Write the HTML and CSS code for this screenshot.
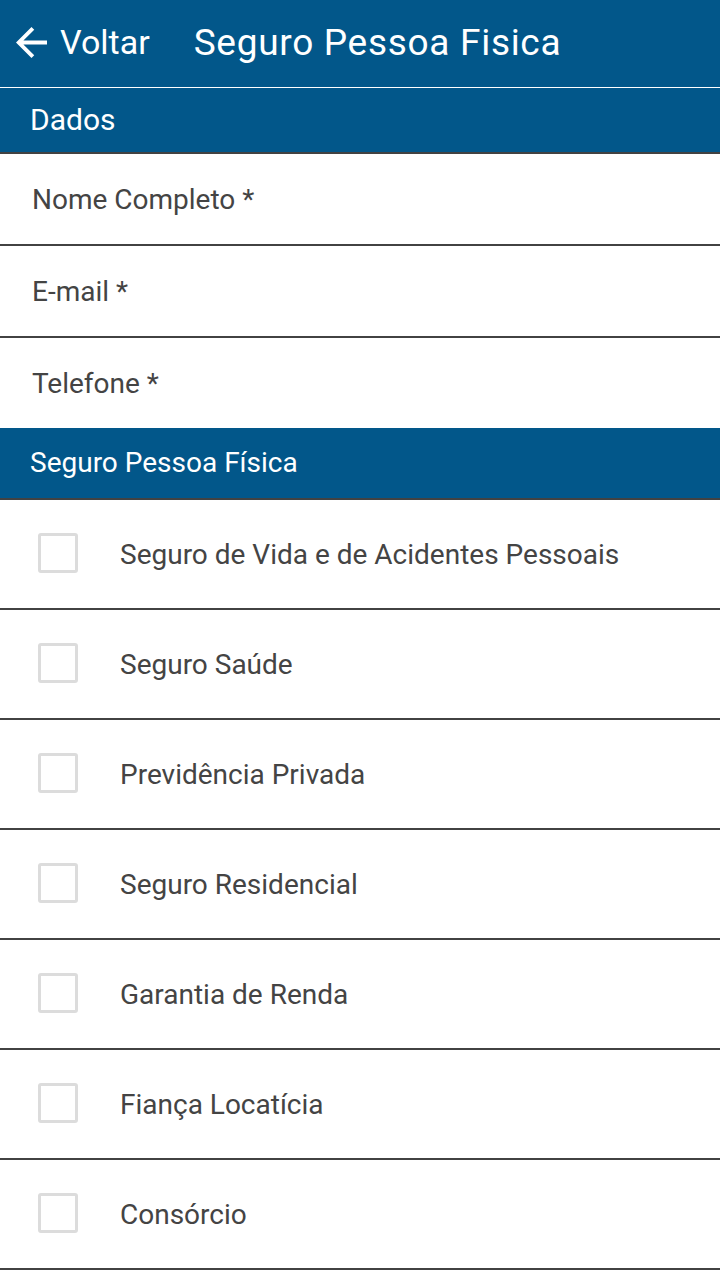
FILE: index.html
```html
<!DOCTYPE html>
<html lang="pt">
<head>
<meta charset="utf-8">
<title>Seguro Pessoa Fisica</title>
<link rel="stylesheet" href="styles.css">
</head>
<body>
<header class="topbar">
  <div class="back">
    <svg class="back-icon" viewBox="4 4 16 16" width="31" height="31"><path d="M20 11H7.83l5.59-5.59L12 4l-8 8 8 8 1.41-1.41L7.83 13H20v-2z" fill="#fff"/></svg>
    <span class="back-label">Voltar</span>
  </div>
  <h1 class="title">Seguro Pessoa Fisica</h1>
</header>
<div class="section section-first">Dados</div>
<div class="field">Nome Completo *</div>
<div class="field">E-mail *</div>
<div class="field field-last">Telefone *</div>
<div class="section section-second">Seguro Pessoa Física</div>
<ul class="options">
  <li class="option"><span class="box"></span><span class="opt-label">Seguro de Vida e de Acidentes Pessoais</span></li>
  <li class="option"><span class="box"></span><span class="opt-label">Seguro Saúde</span></li>
  <li class="option"><span class="box"></span><span class="opt-label">Previdência Privada</span></li>
  <li class="option"><span class="box"></span><span class="opt-label">Seguro Residencial</span></li>
  <li class="option"><span class="box"></span><span class="opt-label">Garantia de Renda</span></li>
  <li class="option"><span class="box"></span><span class="opt-label">Fiança Locatícia</span></li>
  <li class="option"><span class="box"></span><span class="opt-label">Consórcio</span></li>
</ul>
</body>
</html>
```
FILE: styles.css
```css
* { box-sizing: border-box; }
html, body { margin: 0; padding: 0; background: #fff; }
body { font-family: Roboto, "Noto Sans", sans-serif; color: #444; }

.topbar {
  height: 88px;
  background: #02578a;
  border-bottom: 1px solid #fff;
  display: flex;
  align-items: center;
  padding: 0 0 3px 16px;
  color: #fff;
}
.back { display: flex; align-items: center; }
.back-icon { display: block; }
.back-label { font-size: 34px; margin-left: 13px; }
.title { font-size: 37px; font-weight: 400; letter-spacing: 0.7px; margin: 0 0 0 44px; }

.section {
  background: #02578a;
  color: #fff;
  display: flex;
  align-items: center;
  padding: 0 0 2px 30px;
  border-bottom: 2px solid #424242;
}
.section-first { height: 66px; font-size: 30px; }
.section-second { height: 72px; font-size: 28px; }

.field {
  height: 92px;
  display: flex;
  align-items: center;
  padding-left: 32px;
  font-size: 28px;
  border-bottom: 2px solid #424242;
}
.field-last { height: 90px; border-bottom: none; }

.options { list-style: none; margin: 0; padding: 0; }
.option {
  height: 110px;
  display: flex;
  align-items: center;
  padding-left: 38px;
  border-bottom: 2px solid #424242;
}
.box {
  width: 40px;
  height: 40px;
  border: 3px solid #dcdcdc;
  border-radius: 3px;
  margin-top: -2px;
  flex: none;
}
.opt-label { font-size: 28px; margin-left: 42px; }
```
